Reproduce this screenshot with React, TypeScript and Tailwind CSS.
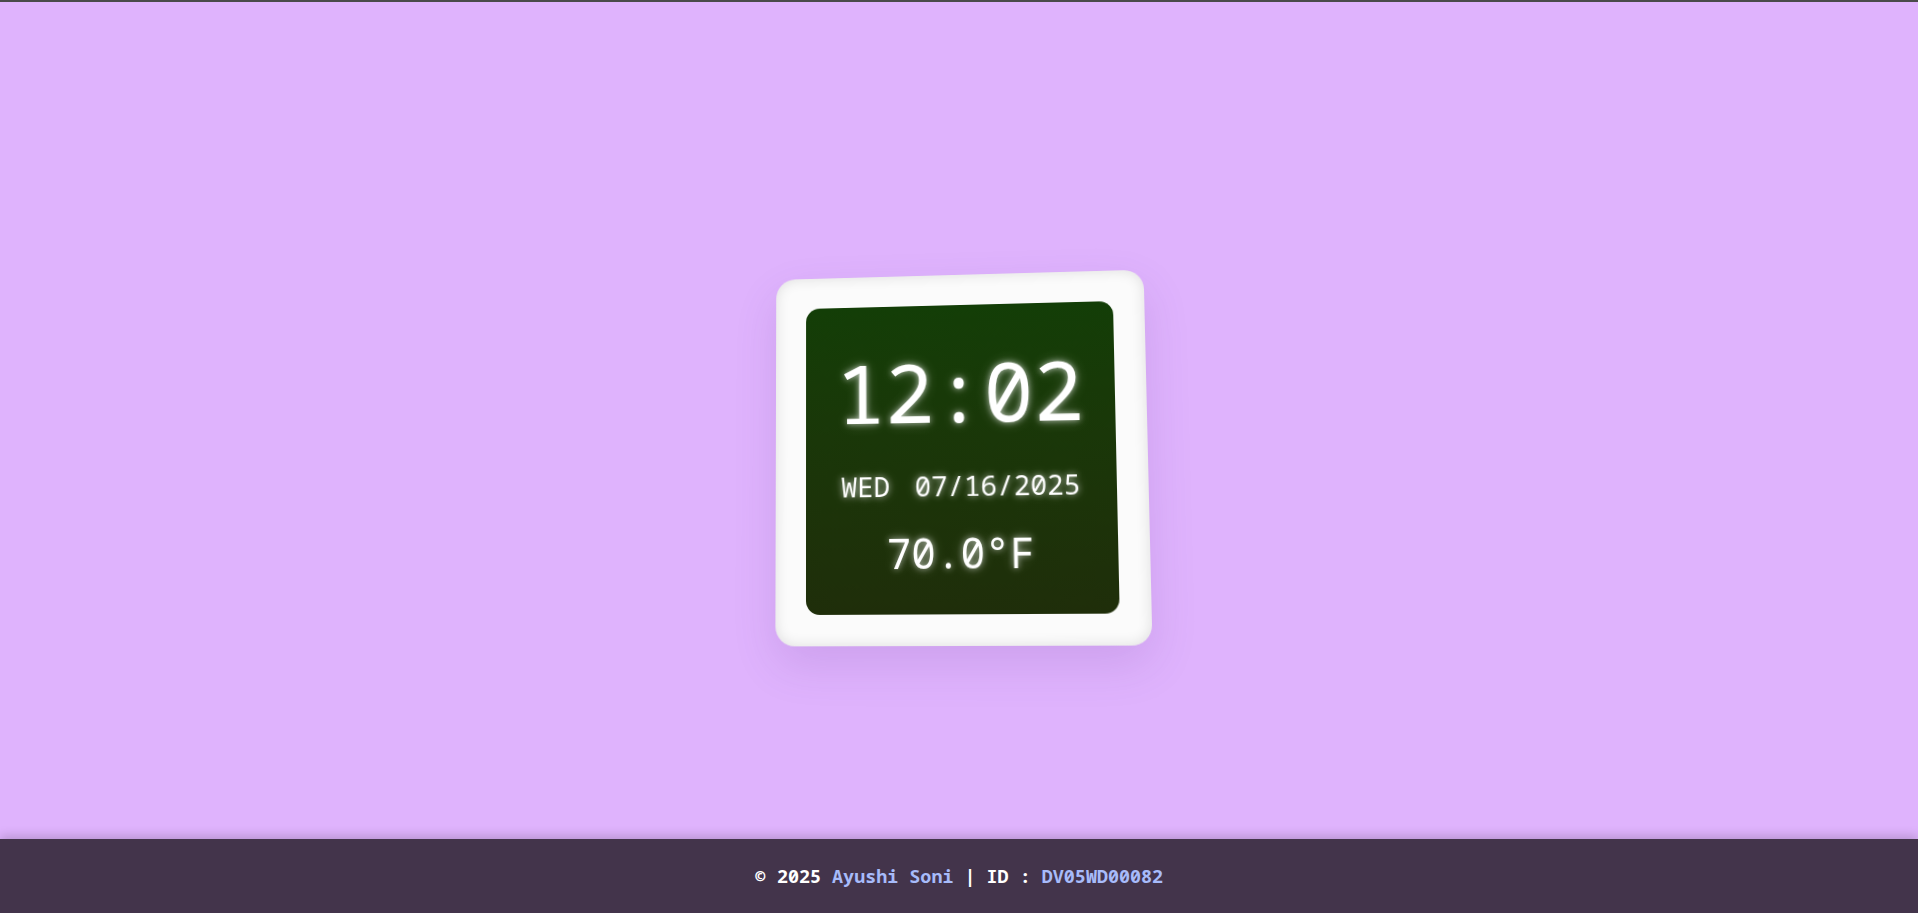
/**
 * Digital desk clock card on a mauve page, with a footer credit bar
 */

const mono = { fontFamily: '"Noto Sans Mono", "DejaVu Sans Mono", monospace' };

function ClockCard() {
  return (
    <div className="rounded-[20px] bg-[#fbfbfb] p-[31px] shadow-[inset_0_0_14px_rgba(0,0,0,0.12),0_18px_45px_rgba(90,40,140,0.14)] [transform:perspective(1000px)_rotateX(4deg)_rotateY(-4deg)_rotate(-0.6deg)]">
      <div
        className="flex h-[310px] w-[311px] flex-col items-center rounded-[14px] bg-gradient-to-b from-[#133e07] to-[#1f2e0a] pt-[45px] text-white [text-shadow:0_0_6px_rgba(255,255,255,0.65),0_0_14px_rgba(255,255,255,0.25)]"
        style={mono}
      >
        <div className="text-[83px] leading-none">12:02</div>
        <div className="mt-[41px] flex gap-[25px] text-[27.5px] leading-none">
          <span>WED</span>
          <span>07/16/2025</span>
        </div>
        <div className="mt-[32px] text-[41px] leading-none">70.0°F</div>
      </div>
    </div>
  );
}

export default function App() {
  return (
    <div className="flex min-h-screen flex-col border-t-2 border-[#4a4a4a] bg-[#dfb3fd]">
      <main className="flex flex-1 items-center justify-center pt-[74px]">
        <ClockCard />
      </main>

      <footer
        className="flex h-[74px] items-center justify-center bg-[#43344b] text-[18.4px] font-bold text-white shadow-[0_-3px_10px_rgba(0,0,0,0.18)]"
        style={mono}
      >
        <p>
          © 2025 <span className="text-[#a7bbfa]">Ayushi Soni</span> | ID :{' '}
          <span className="text-[#a7bbfa]">DV05WD00082</span>
        </p>
      </footer>
    </div>
  );
}
